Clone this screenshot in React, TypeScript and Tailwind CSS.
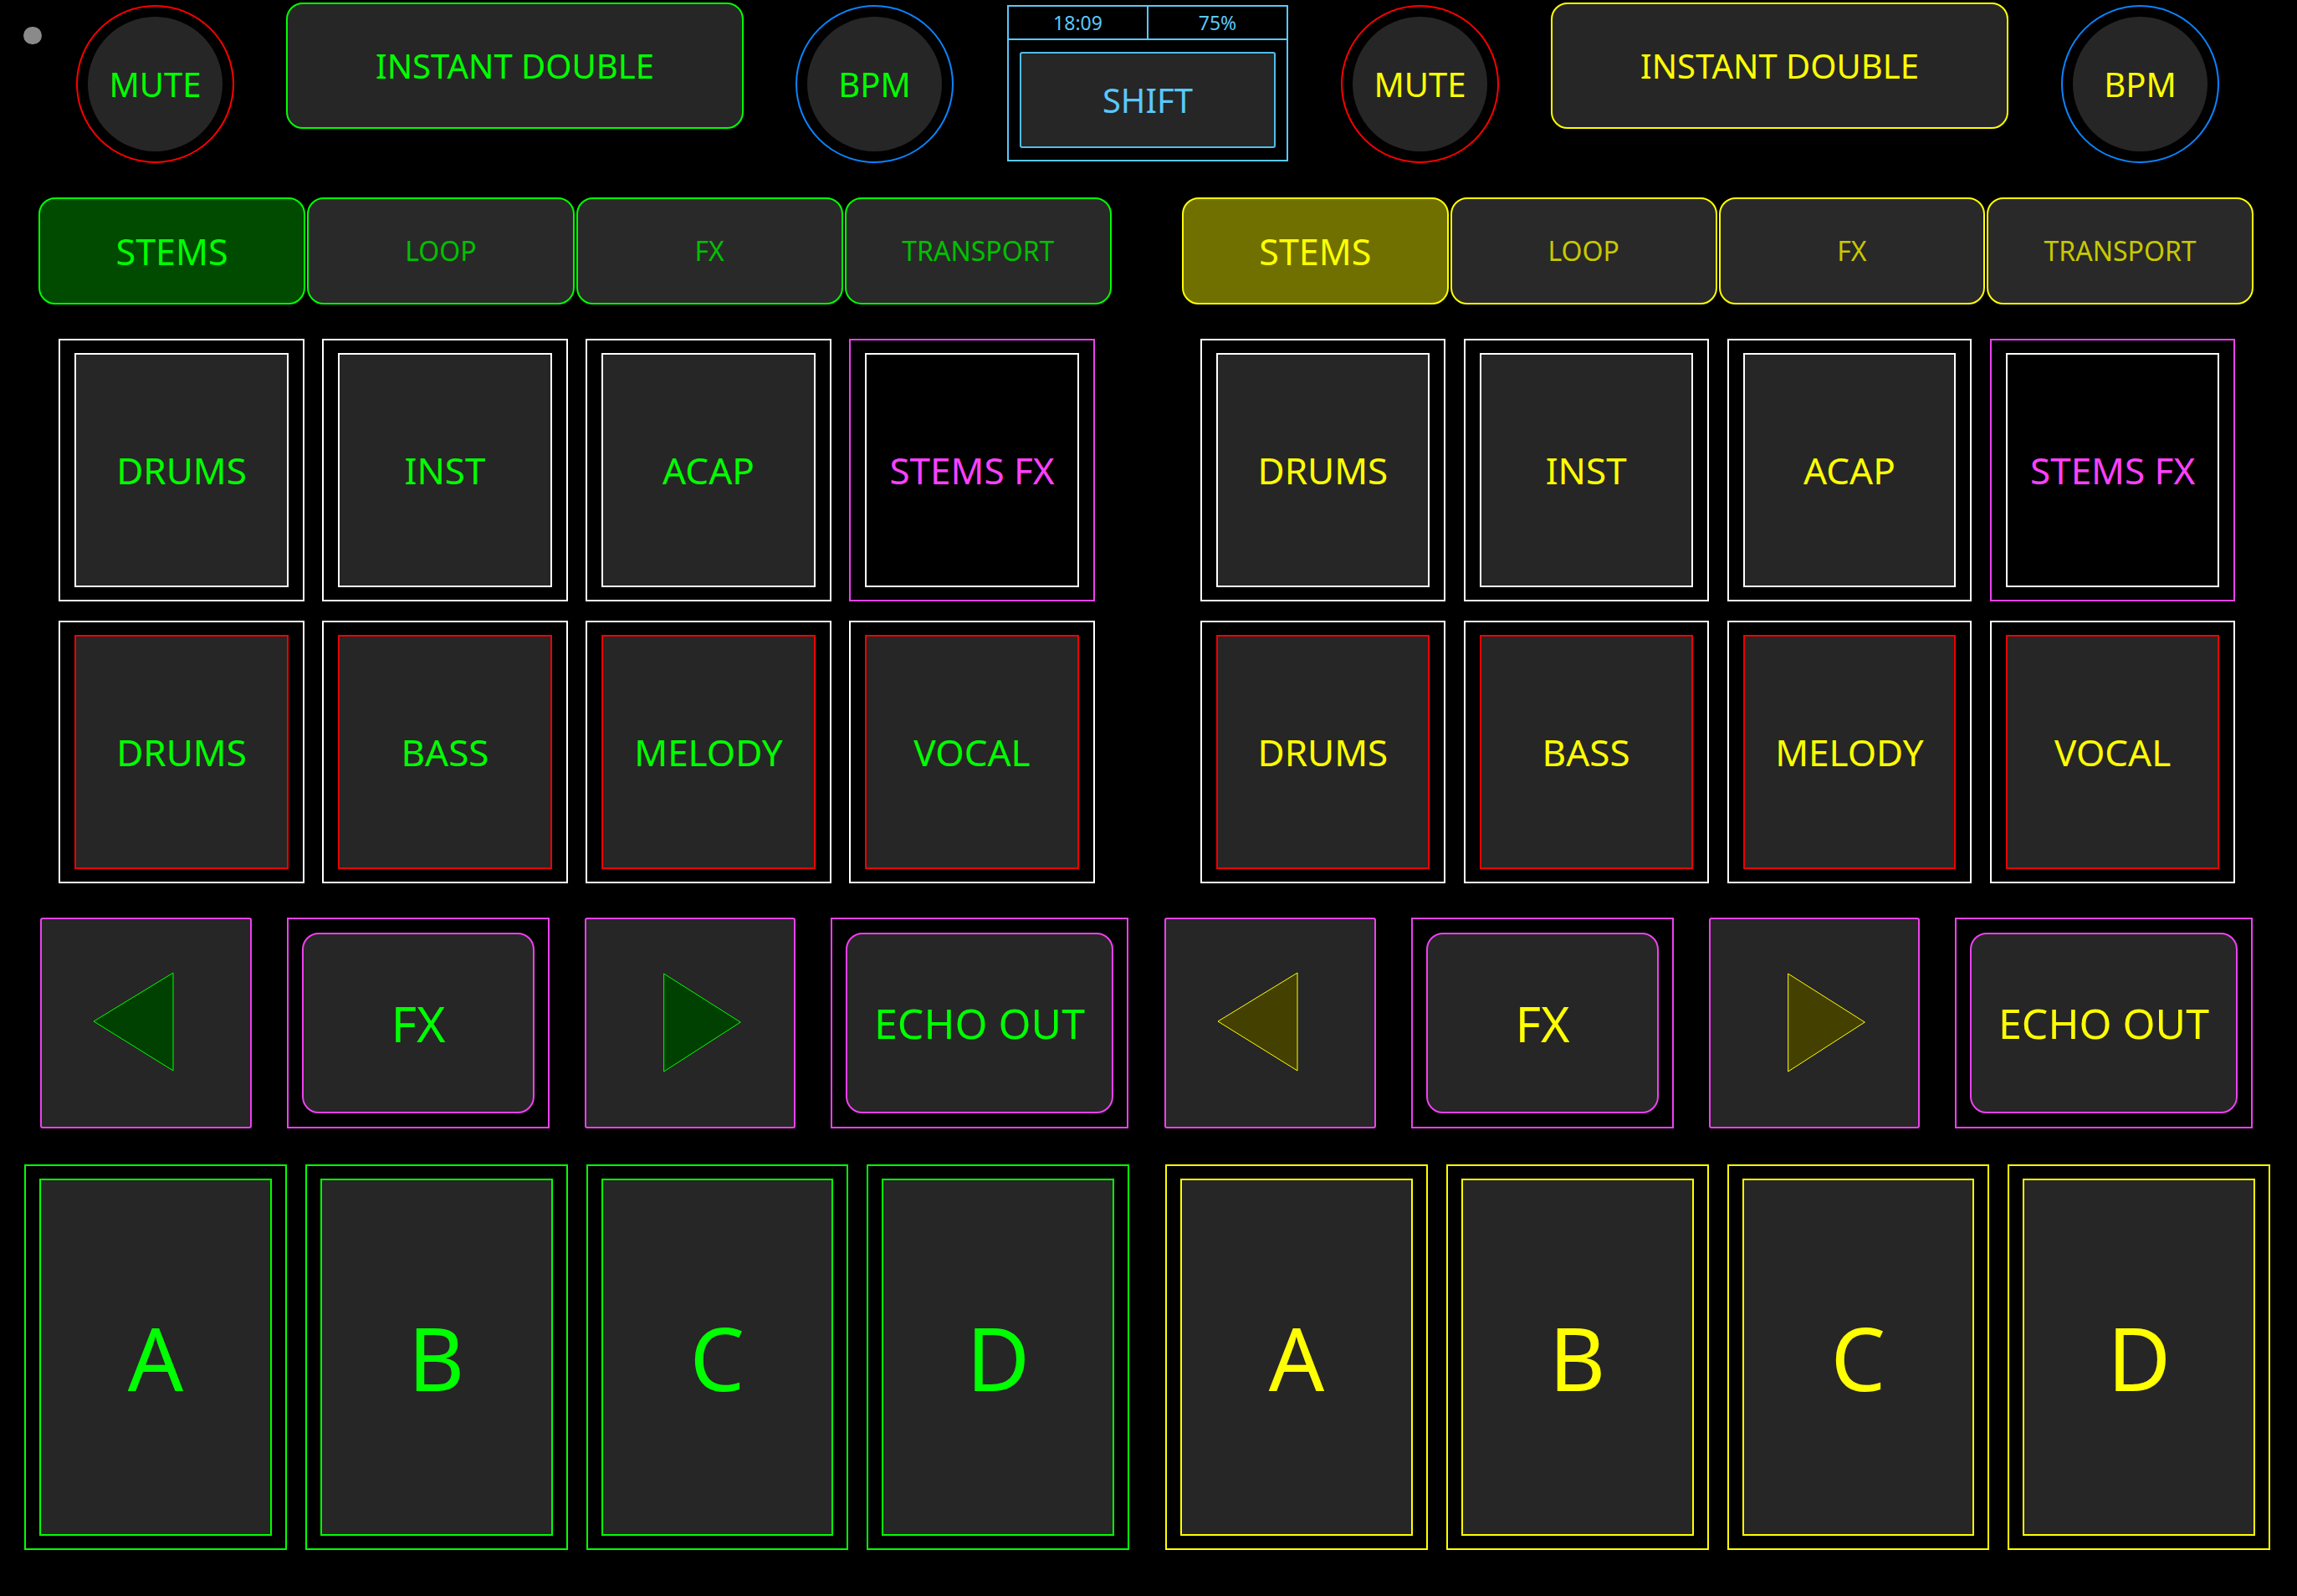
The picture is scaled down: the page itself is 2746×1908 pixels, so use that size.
import React from "react";

type Deck = {
  text: string;
  border: string;
  tabActiveBg: string;
  tabDimText: string;
  triFill: string;
  triStroke: string;
};

const GREEN: Deck = {
  text: "text-[#00ff00]",
  border: "border-[#00ff00]",
  tabActiveBg: "bg-[#004b00]",
  tabDimText: "text-[#00c000]",
  triFill: "#004000",
  triStroke: "#00ff00",
};

const YELLOW: Deck = {
  text: "text-[#ffff00]",
  border: "border-[#ffff00]",
  tabActiveBg: "bg-[#707000]",
  tabDimText: "text-[#c8c800]",
  triFill: "#444000",
  triStroke: "#ffff00",
};

function RingButton({ label, ring, text }: { label: string; ring: string; text: string }) {
  return (
    <div
      className={`mt-[3px] flex h-[189px] w-[189px] shrink-0 items-center justify-center rounded-full border-2 ${ring}`}
    >
      <div
        className={`flex h-[161px] w-[161px] items-center justify-center rounded-full bg-[#262626] text-[40px] leading-none ${text}`}
      >
        {label}
      </div>
    </div>
  );
}

function WideButton({ deck }: { deck: Deck }) {
  return (
    <div
      className={`flex h-[151px] w-[547px] shrink-0 items-center justify-center rounded-[20px] border-2 bg-[#262626] text-[40px] leading-none ${deck.border} ${deck.text}`}
    >
      INSTANT DOUBLE
    </div>
  );
}

function ShiftPanel() {
  return (
    <div className="mt-[3px] flex h-[187px] w-[336px] shrink-0 flex-col border-2 border-[#5ac8fa] text-[#5ac8fa]">
      <div className="flex h-[40px] border-b-2 border-[#5ac8fa]">
        <div className="flex flex-1 items-center justify-center border-r-2 border-[#5ac8fa] text-[23px] leading-none">
          18:09
        </div>
        <div className="flex flex-1 items-center justify-center text-[23px] leading-none">75%</div>
      </div>
      <div className="flex-1 px-[13px] pb-[14px] pt-[14px]">
        <div className="flex h-full items-center justify-center rounded-[3px] border-2 border-[#52bde8] bg-[#262626] text-[40px] leading-none">
          SHIFT
        </div>
      </div>
    </div>
  );
}

function Tabs({ deck, width }: { deck: Deck; width: string }) {
  const names = ["STEMS", "LOOP", "FX", "TRANSPORT"];
  return (
    <div className={`grid h-[128px] shrink-0 grid-cols-4 gap-[2px] ${width}`}>
      {names.map((n, i) =>
        i === 0 ? (
          <div
            key={n}
            className={`flex items-center justify-center rounded-[20px] border-2 text-[43px] leading-none ${deck.border} ${deck.tabActiveBg} ${deck.text}`}
          >
            {n}
          </div>
        ) : (
          <div
            key={n}
            className={`flex items-center justify-center rounded-[20px] border-2 bg-[#292929] text-[32px] leading-none ${deck.border} ${deck.tabDimText}`}
          >
            {n}
          </div>
        )
      )}
    </div>
  );
}

function Pad({
  label,
  outer,
  inner,
  fill,
  text,
}: {
  label: string;
  outer: string;
  inner: string;
  fill: string;
  text: string;
}) {
  return (
    <div className={`h-[314px] border-2 px-[17px] py-[15px] ${outer}`}>
      <div
        className={`flex h-full items-center justify-center border-2 text-[44px] leading-none ${inner} ${fill} ${text}`}
      >
        {label}
      </div>
    </div>
  );
}

function StemPads({ deck, className }: { deck: Deck; className: string }) {
  const top = ["DRUMS", "INST", "ACAP"];
  const bottom = ["DRUMS", "BASS", "MELODY", "VOCAL"];
  return (
    <div className={`grid shrink-0 grid-cols-4 gap-y-[23px] ${className}`}>
      {top.map((t) => (
        <Pad key={`t-${t}`} label={t} outer="border-white" inner="border-white" fill="bg-[#262626]" text={deck.text} />
      ))}
      <Pad label="STEMS FX" outer="border-[#f040f0]" inner="border-white" fill="bg-black" text="text-[#ff40ff]" />
      {bottom.map((t) => (
        <Pad key={`b-${t}`} label={t} outer="border-white" inner="border-[#ee0000]" fill="bg-[#262626]" text={deck.text} />
      ))}
    </div>
  );
}

function ArrowBox({ deck, dir, width }: { deck: Deck; dir: "left" | "right"; width: string }) {
  const points = dir === "left" ? "62,122 157,64 157,181" : "93,65 185,123 93,182";
  return (
    <div className={`h-[252px] shrink-0 rounded-[3px] border-2 border-[#f040f0] bg-[#262626] ${width}`}>
      <svg className="block h-full w-full" viewBox="0 0 249 248" preserveAspectRatio="none">
        <polygon points={points} fill={deck.triFill} stroke={deck.triStroke} strokeWidth="1" />
      </svg>
    </div>
  );
}

function FramedButton({ deck, label, width, size }: { deck: Deck; label: string; width: string; size: string }) {
  return (
    <div className={`h-[252px] shrink-0 border-2 border-[#f040f0] p-[16px] ${width}`}>
      <div
        className={`flex h-full items-center justify-center rounded-[20px] border-2 border-[#f040f0] bg-[#262626] leading-none ${size} ${deck.text}`}
      >
        {label}
      </div>
    </div>
  );
}

function FxRow({ deck, className }: { deck: Deck; className: string }) {
  return (
    <div className={`flex shrink-0 gap-[42px] ${className}`}>
      <ArrowBox deck={deck} dir="left" width="w-[253px]" />
      <FramedButton deck={deck} label="FX" width="w-[314px]" size="text-[59px]" />
      <ArrowBox deck={deck} dir="right" width="w-[252px]" />
      <FramedButton deck={deck} label="ECHO OUT" width="w-[356px]" size="text-[50px]" />
    </div>
  );
}

function HotCues({ deck, className }: { deck: Deck; className: string }) {
  return (
    <div className={`grid h-[461px] shrink-0 grid-cols-4 gap-x-[22px] ${className}`}>
      {["A", "B", "C", "D"].map((l) => (
        <div key={l} className={`border-2 px-[16px] py-[15px] ${deck.border}`}>
          <div
            className={`flex h-full items-center justify-center border-2 bg-[#262626] text-[104px] leading-none ${deck.border} ${deck.text}`}
          >
            {l}
          </div>
        </div>
      ))}
    </div>
  );
}

export default function App() {
  return (
    <div className="flex h-[1908px] w-[2746px] flex-col overflow-hidden bg-black font-['Noto_Sans',sans-serif] font-normal">
      {/* header: deck buttons and shift panel */}
      <div className="flex items-start pl-[28px] pt-[3px]">
        <div className="mt-[29px] h-[21px] w-[22px] shrink-0 rounded-full bg-[#8a8a8a]" />
        <div className="ml-[41px]">
          <RingButton label="MUTE" ring="border-[#ff0000]" text={GREEN.text} />
        </div>
        <div className="ml-[62px]">
          <WideButton deck={GREEN} />
        </div>
        <div className="ml-[62px]">
          <RingButton label="BPM" ring="border-[#0a84ff]" text={GREEN.text} />
        </div>
        <div className="ml-[64px]">
          <ShiftPanel />
        </div>
        <div className="ml-[63px]">
          <RingButton label="MUTE" ring="border-[#ff0000]" text={YELLOW.text} />
        </div>
        <div className="ml-[62px]">
          <WideButton deck={YELLOW} />
        </div>
        <div className="ml-[63px]">
          <RingButton label="BPM" ring="border-[#0a84ff]" text={YELLOW.text} />
        </div>
      </div>

      {/* page tabs */}
      <div className="mt-[41px] flex pl-[46px]">
        <Tabs deck={GREEN} width="w-[1283px]" />
        <div className="ml-[84px]">
          <Tabs deck={YELLOW} width="w-[1281px]" />
        </div>
      </div>

      {/* stem pads */}
      <div className="mt-[41px] flex pl-[70px]">
        <StemPads deck={GREEN} className="w-[1239px] gap-x-[21px]" />
        <StemPads deck={YELLOW} className="ml-[126px] w-[1237px] gap-x-[22px]" />
      </div>

      {/* fx strip */}
      <div className="mt-[41px] flex pl-[48px]">
        <FxRow deck={GREEN} className="" />
        <FxRow deck={YELLOW} className="ml-[43px]" />
      </div>

      {/* hot cues */}
      <div className="mt-[43px] flex pl-[29px]">
        <HotCues deck={GREEN} className="w-[1321px]" />
        <HotCues deck={YELLOW} className="ml-[43px] w-[1321px]" />
      </div>
    </div>
  );
}
